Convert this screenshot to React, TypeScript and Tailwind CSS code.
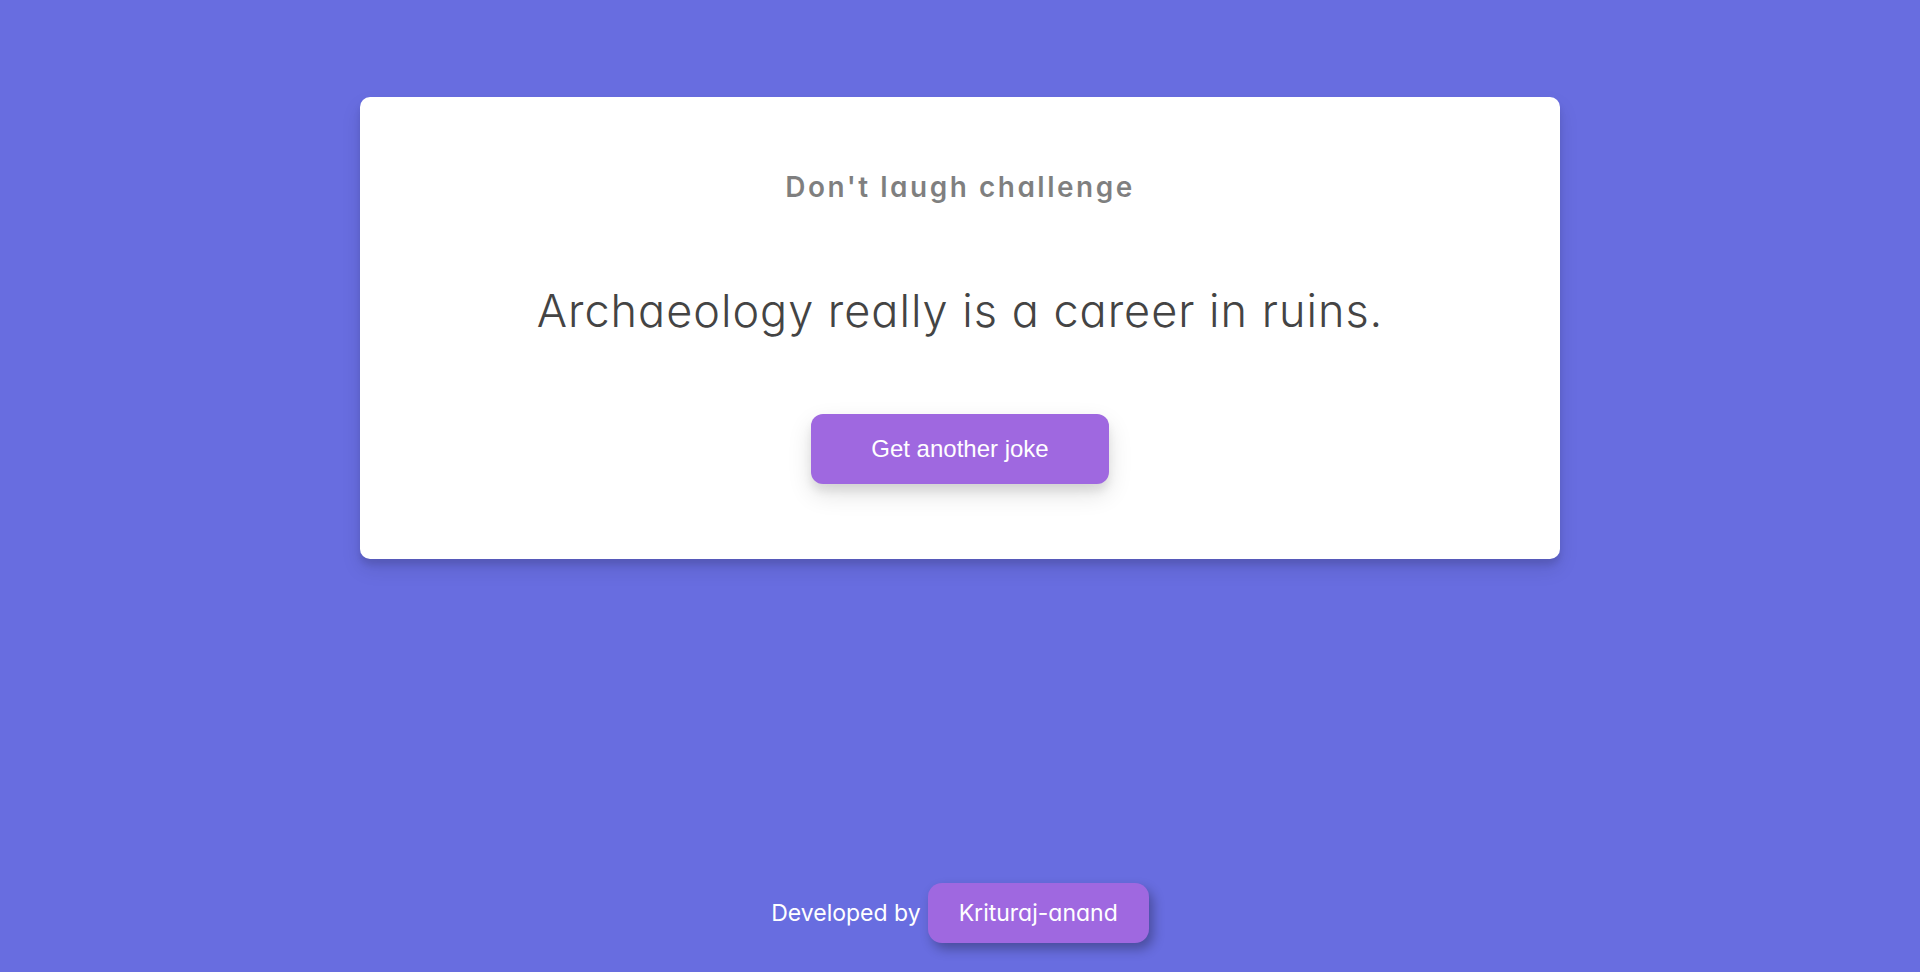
import React from 'react';

const joke = 'Archaeology really is a career in ruins.';

export default function App() {
  return <div className="min-h-screen bg-[#686de0] flex flex-col items-center font-['Inter',sans-serif] [font-feature-settings:'cv11']">
      {/* Joke card */}
      <div className="mt-[97px] w-[1200px] h-[462px] bg-white rounded-[10px] shadow-[0_10px_20px_rgba(0,0,0,0.1),0_6px_6px_rgba(0,0,0,0.1)] flex flex-col items-center text-center">
        <h3 className="mt-[70px] text-[28px] leading-[40px] font-semibold tracking-[2.5px] text-black/50">
          Don't laugh challenge
        </h3>
        <div className="mt-[80px] text-[45px] leading-[48px] font-light tracking-[1px] text-[#444]">
          {joke}
        </div>
        <button className="mt-[79px] w-[298px] h-[70px] rounded-[12px] bg-[#9f68e0] text-white text-[24px] font-['Liberation_Sans',Arial,sans-serif] shadow-[0_10px_24px_rgba(0,0,0,0.12),0_7px_8px_rgba(0,0,0,0.08)]">
          Get another joke
        </button>
      </div>

      {/* Footer */}
      <footer className="mt-auto mb-[29px] flex items-center gap-[7px] text-white text-[23px]">
        <span>Developed by</span>
        <a href="#" className="h-[60px] px-[31px] flex items-center rounded-[14px] bg-[#9f68e0] shadow-[4px_6px_12px_rgba(0,0,0,0.3)]">
          Krituraj-anand
        </a>
      </footer>
    </div>;
}
